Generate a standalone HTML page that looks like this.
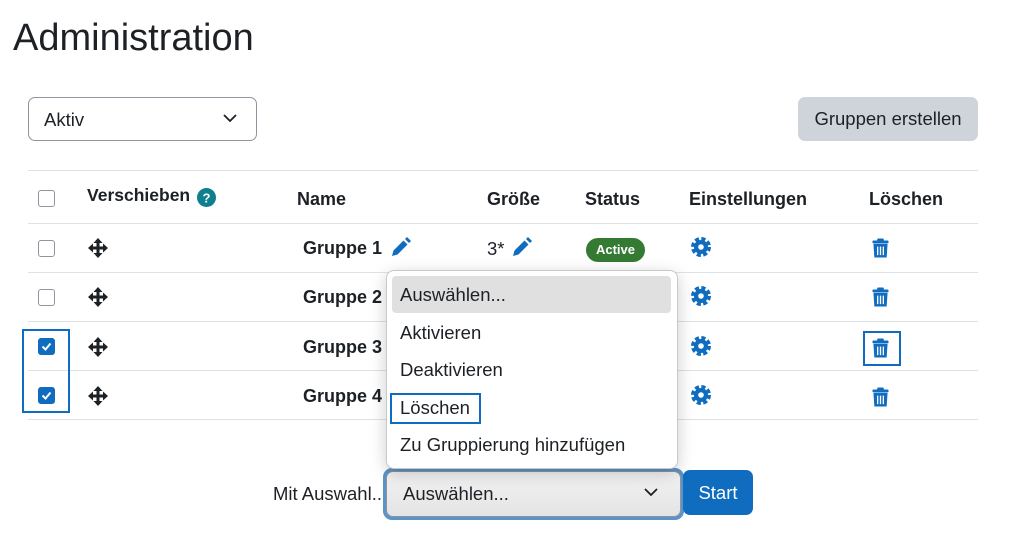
<!DOCTYPE html>
<html><head><meta charset="utf-8"><style>
*{margin:0;padding:0;box-sizing:border-box}
body{width:1029px;height:555px;background:#fff;font-family:"Liberation Sans",sans-serif;color:#1d2125;position:relative;overflow:hidden;font-size:18.5px}
.a{position:absolute}
.line{position:absolute;left:28px;width:950px;height:1px;background:#dee2e6}
.cb{position:absolute;width:17px;height:17px;border:1px solid #8f959e;border-radius:3px;background:#fff}
.cbc{background:#0f6cbf;border-color:#0f6cbf}
.h{position:absolute;font-weight:bold;font-size:18px}
.g{position:absolute;font-weight:bold;font-size:18px;left:303px}
.mi{position:absolute;left:400px;font-size:18.5px}
</style></head><body>
<div class="a" style="left:13px;top:17px;font-size:38px;color:#1d2125">Administration</div>
<div class="a" style="left:28px;top:97px;width:229px;height:44px;border:1px solid #8f959e;border-radius:7px"></div>
<div class="a" style="left:44px;top:109px">Aktiv</div>
<svg class="a" style="left:223px;top:113px" width="14" height="10"><path d="M1 2l6 6 6-6" fill="none" stroke="#1d2125" stroke-width="1.8"/></svg>
<div class="a" style="left:798px;top:97px;width:180px;height:44px;background:#ced4da;border-radius:7px;text-align:center;line-height:44px">Gruppen erstellen</div>

<div class="line" style="top:170px"></div>
<div class="line" style="top:223px"></div>
<div class="line" style="top:272px"></div>
<div class="line" style="top:321px"></div>
<div class="line" style="top:370px"></div>
<div class="line" style="top:419px"></div>

<div class="cb" style="left:38px;top:190px"></div>
<div class="h" style="left:87px;top:185px;font-size:17.5px">Verschieben</div>
<svg class="a" style="left:197px;top:188px" width="19" height="19"><circle cx="9.5" cy="9.5" r="9.5" fill="#0f7e8f"/><text x="9.5" y="14.5" text-anchor="middle" fill="#fff" font-size="13" font-weight="bold" font-family="Liberation Sans">?</text></svg>
<div class="h" style="left:297px;top:189px">Name</div>
<div class="h" style="left:487px;top:189px">Größe</div>
<div class="h" style="left:585px;top:189px">Status</div>
<div class="h" style="left:689px;top:189px">Einstellungen</div>
<div class="h" style="left:869px;top:189px">Löschen</div>

<div class="cb" style="left:38px;top:240px"></div>
<div class="cb" style="left:38px;top:289px"></div>
<div class="cb cbc" style="left:38px;top:338px"><svg width="15" height="15" style="display:block"><path d="M3.5 7.5l3 3 5-6" fill="none" stroke="#fff" stroke-width="2"/></svg></div>
<div class="cb cbc" style="left:38px;top:387px"><svg width="15" height="15" style="display:block"><path d="M3.5 7.5l3 3 5-6" fill="none" stroke="#fff" stroke-width="2"/></svg></div>
<div class="a" style="left:22px;top:329px;width:48px;height:84px;border:2px solid #0f6cbf"></div>

<svg width="0" height="0" style="position:absolute"><defs>
<symbol id="mv" viewBox="0 0 20 20"><path d="M10 2v16M2 10h16" stroke="#1d2125" stroke-width="3"/><path d="M10 0l4.5 5h-9zM10 20l4.5-5h-9zM0 10l5-4.5v9zM20 10l-5-4.5v9z" fill="#1d2125"/></symbol>
<symbol id="pen" viewBox="0 0 20 20"><path d="M1 19l1.5-5.5 10-10 4 4-10 10z" fill="#0f6cbf"/><path d="M14 2l2-2 4 4-2 2z" fill="#0f6cbf"/></symbol>
<symbol id="gear" viewBox="0 0 20 20"><circle cx="10" cy="10" r="7" fill="#0f6cbf"/><circle cx="10" cy="10" r="8" fill="none" stroke="#0f6cbf" stroke-width="4" stroke-dasharray="4 2.3"/><circle cx="10" cy="10" r="2.8" fill="#fff"/></symbol>
<symbol id="tr" viewBox="0 0 18 20"><rect x="0.5" y="2" width="17" height="3" rx="1" fill="#0f6cbf"/><rect x="5.5" y="0" width="7" height="3" rx="1" fill="#0f6cbf"/><path d="M1.5 5.5h15l-1 14.5h-13z" fill="#0f6cbf"/><path d="M6 8.5v9M9 8.5v9M12 8.5v9" stroke="#fff" stroke-width="1.4"/></symbol>
</defs></svg>

<svg class="a" style="left:88px;top:238px" width="20" height="20"><use href="#mv"/></svg>
<svg class="a" style="left:88px;top:287px" width="20" height="20"><use href="#mv"/></svg>
<svg class="a" style="left:88px;top:337px" width="20" height="20"><use href="#mv"/></svg>
<svg class="a" style="left:88px;top:386px" width="20" height="20"><use href="#mv"/></svg>

<div class="g" style="top:238px">Gruppe 1</div>
<div class="g" style="top:287px">Gruppe 2</div>
<div class="g" style="top:337px">Gruppe 3</div>
<div class="g" style="top:386px">Gruppe 4</div>
<svg class="a" style="left:391px;top:237px" width="20" height="20"><use href="#pen"/></svg>
<div class="a" style="left:487px;top:238px">3*</div>
<svg class="a" style="left:512px;top:237px" width="20" height="20"><use href="#pen"/></svg>
<div class="a" style="left:586px;top:238px;width:59px;height:24px;background:#357a32;border-radius:12px;color:#fff;font-weight:bold;font-size:13px;text-align:center;line-height:24px">Active</div>

<svg class="a" style="left:691px;top:237px" width="20" height="20"><use href="#gear"/></svg>
<svg class="a" style="left:691px;top:286px" width="20" height="20"><use href="#gear"/></svg>
<svg class="a" style="left:691px;top:336px" width="20" height="20"><use href="#gear"/></svg>
<svg class="a" style="left:691px;top:385px" width="20" height="20"><use href="#gear"/></svg>
<svg class="a" style="left:872px;top:238px" width="17" height="20"><use href="#tr"/></svg>
<svg class="a" style="left:872px;top:287px" width="17" height="20"><use href="#tr"/></svg>
<svg class="a" style="left:872px;top:338px" width="17" height="20"><use href="#tr"/></svg>
<svg class="a" style="left:872px;top:387px" width="17" height="20"><use href="#tr"/></svg>
<div class="a" style="left:863px;top:331px;width:38px;height:35px;border:2px solid #0f6cbf"></div>

<div class="a" style="left:273px;top:483px">Mit Auswahl...</div>
<div class="a" style="left:383px;top:468px;width:301px;height:52px;border:4px solid #5a94c9;border-radius:9px;background:#eaeaea"></div>
<div class="a" style="left:386px;top:471px;width:295px;height:46px;border:1px solid #8f959e;border-radius:7px;background:linear-gradient(#f2f2f2,#e4e4e4)"></div>
<div class="a" style="left:403px;top:483px">Auswählen...</div>
<svg class="a" style="left:644px;top:487px" width="14" height="10"><path d="M1 2l6 6 6-6" fill="none" stroke="#1d2125" stroke-width="1.8"/></svg>
<div class="a" style="left:683px;top:470px;width:70px;height:45px;background:#0f6cbf;border-radius:7px;color:#fff;text-align:center;line-height:45px">Start</div>

<div class="a" style="left:386px;top:270px;width:292px;height:199px;background:#fff;border:1px solid #c8c8c8;border-radius:8px;box-shadow:0 4px 16px rgba(0,0,0,.2)"></div>
<div class="a" style="left:392px;top:276px;width:279px;height:37px;background:#e0e0e0;border-radius:4px"></div>
<div class="mi" style="top:284px">Auswählen...</div>
<div class="mi" style="top:322px">Aktivieren</div>
<div class="mi" style="top:359px">Deaktivieren</div>
<div class="mi" style="top:397px">Löschen</div>
<div class="mi" style="top:434px">Zu Gruppierung hinzufügen</div>
<div class="a" style="left:390px;top:393px;width:91px;height:31px;border:2px solid #0f6cbf"></div>
</body></html>
